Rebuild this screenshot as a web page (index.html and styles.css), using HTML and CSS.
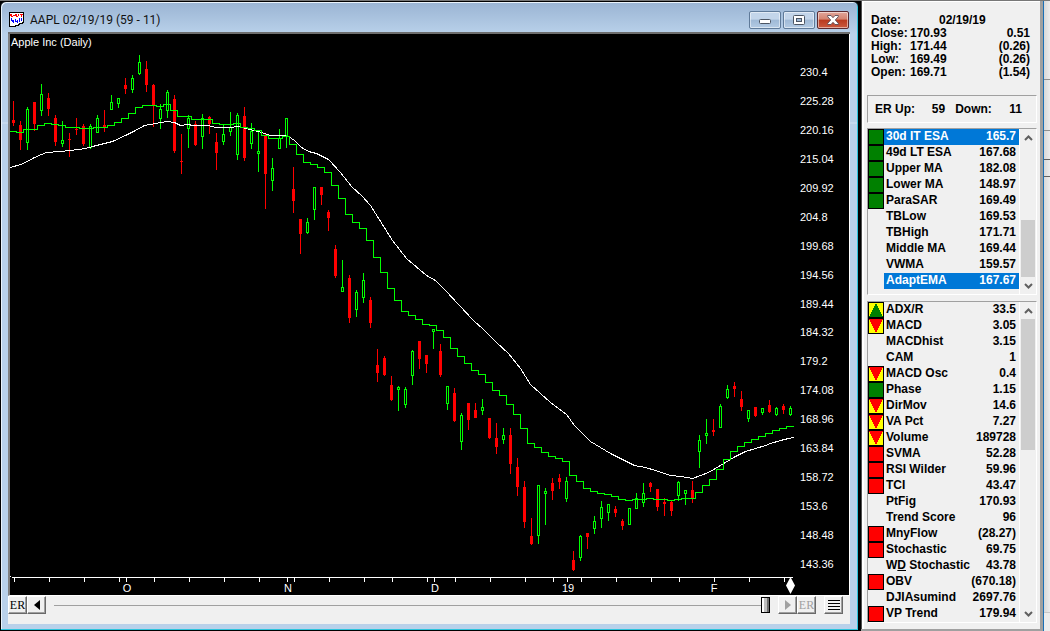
FILE: index.html
```html
<!DOCTYPE html>
<html lang="en">
<head>
<meta charset="utf-8">
<title>AAPL 02/19/19 (59 - 11)</title>
<link rel="stylesheet" href="styles.css">
</head>
<body>
<div class="desktop">
  <main class="window">
    <header class="titlebar">
      <svg class="app-icon" viewBox="0 0 16 16" width="16" height="16" aria-hidden="true" shape-rendering="crispEdges">
        <path d="M0 0h15v11l-3 1-3 2-4 1H0z" fill="#000"/>
        <path d="M1 1h13v9l-3 1-3 2-4 1H1z" fill="#fff"/>
        <path d="M1 2h2v2H1zM4 3h2v1H4zM6 2h2v2H6zM9 2h1v2H9zM11 2h3v1h-3zM2 4h2v1H2zM7 4h2v1H7zM12 3h1v2h-1z" fill="#f00"/>
        <path d="M2 6h1v3H2zM4 8h1v3H4zM6 7h1v3H6zM8 8h1v3H8zM10 6h1v4h-1zM12 6h1v3h-1zM3 8h1v2H3zM7 9h1v1H7z" fill="#00f"/>
      </svg>
      <h1 class="title">AAPL 02/19/19 (59 - 11)</h1>
      <div class="window-buttons">
        <button class="wbtn" aria-label="Minimize"><svg viewBox="0 0 12 10" width="12" height="10"><rect x=".5" y="4.500" width="11" height="4" rx="1" fill="#fff" stroke="#4c5563"/></svg></button>
        <button class="wbtn" aria-label="Maximize"><svg viewBox="0 0 12 10" width="12" height="10"><rect x=".5" y=".5" width="11" height="9" rx="1" fill="#fff" stroke="#4c5563"/><rect x="3.500" y="3.500" width="5" height="3" fill="#9fb9d6" stroke="#4c5563"/></svg></button>
        <button class="wbtn wbtn-close" aria-label="Close"><svg viewBox="0 0 12 10" width="12" height="10"><path d="M.7 .5h3.300L6 2.700 8 .5h3.300v1.200L8.300 5l3 3.300v1.200H8L6 7.300 4 9.500H.7V8.300l3-3.300-3-3.300z" fill="#fff" stroke="#5a4a55" stroke-width=".9"/></svg></button>
      </div>
    </header>
    <div class="client">
      <svg class="chart" id="chart" viewBox="10 34 839 561" role="img" aria-label="Apple Inc daily price chart">
        <g id="candles" shape-rendering="crispEdges"></g>
        <polyline class="average" shape-rendering="crispEdges" transform="translate(0.5 0.5)" points="10,167 20,164 27,161 34,157 41,154 46,152 60,151 70,150 85,148 92,146 104,143 112,141 125,135 135,130 144,125 155,123 167,121 174,122 180,125 187,124 193,125 208,125 215,127 230,127 238,126 245,128 258,131 270,135 283,135 288,136 294,140 301,147 308,151 316,153 328,159 340,172 351,186 362,196 370,205 392,240 406,258 426,275 435,280 445,290 458,304 473,320 483,329 496,342 508,353 520,368 530,384 540,393 550,402 566,414 574,425 590,441 610,453 634,465 645,467 655,470 670,475 680,476 692,478 700,475 708,472 720,465 733,457 745,451 755,448 765,445 770,443 780,440 788,438 794,437"/>
        <path id="steps" class="steps" shape-rendering="crispEdges"/>
        <path id="axis" class="axis" shape-rendering="crispEdges"/>
        <path class="marker" d="M790.500 577l4.500 8.500-4.500 8.500-4.500-8.500z"/>
        <text class="label" x="11" y="46">Apple Inc (Daily)</text>
        <g id="prices" class="label"></g>
        <g class="label month">
          <text x="127" y="592">O</text><text x="288" y="592">N</text><text x="435" y="592">D</text><text x="568" y="592">19</text><text x="714" y="592">F</text>
        </g>
      </svg>
      <div class="toolbar">
        <button class="tool serif">ER</button>
        <button class="tool" aria-label="Back"><svg viewBox="0 0 6 10" width="6" height="10"><path d="M6 0v10L0 5z" fill="#000"/></svg></button>
        <input class="slider" type="range" min="0" max="100" value="100" aria-label="Date position">
        <button class="tool tool-off" aria-label="Forward"><svg viewBox="0 0 6 10" width="6" height="10"><path d="M0 0v10l6-5z" fill="#a0a0a0"/></svg></button>
        <button class="tool tool-off serif">ER</button>
        <button class="tool tool-menu" aria-label="Menu"><svg viewBox="0 0 12 12" width="12" height="12" shape-rendering="crispEdges"><path d="M0 1h12v1H0zM0 4h12v1H0zM0 7h12v1H0zM0 10h12v1H0z" fill="#000"/></svg></button>
      </div>
    </div>
  </main>

  <aside class="panel">
    <table class="quote">
      <tr><th>Date:</th><td class="date" colspan="2">02/19/19</td></tr>
      <tr><th>Close:</th><td>170.93</td><td class="num">0.51</td></tr>
      <tr><th>High:</th><td>171.44</td><td class="num">(0.26)</td></tr>
      <tr><th>Low:</th><td>169.49</td><td class="num">(0.26)</td></tr>
      <tr><th>Open:</th><td>169.71</td><td class="num">(1.54)</td></tr>
    </table>
    <div class="er"><span>ER Up:</span><span class="er-value">59</span><span class="er-down">Down:</span><span class="er-value">11</span></div>

    <section class="list list-top">
      <table class="rows">
        <tr class="selected"><td class="flag green"></td><th>30d IT ESA</th><td class="num">165.7</td></tr>
        <tr><td class="flag green"></td><th>49d LT ESA</th><td class="num">167.68</td></tr>
        <tr><td class="flag green"></td><th>Upper MA</th><td class="num">182.08</td></tr>
        <tr><td class="flag green"></td><th>Lower MA</th><td class="num">148.97</td></tr>
        <tr><td class="flag green"></td><th>ParaSAR</th><td class="num">169.49</td></tr>
        <tr><td></td><th>TBLow</th><td class="num">169.53</td></tr>
        <tr><td></td><th>TBHigh</th><td class="num">171.71</td></tr>
        <tr><td></td><th>Middle MA</th><td class="num">169.44</td></tr>
        <tr><td></td><th>VWMA</th><td class="num">159.57</td></tr>
        <tr class="selected"><td></td><th>AdaptEMA</th><td class="num">167.67</td></tr>
      </table>
      <div class="scroll">
        <button class="arrow" aria-label="Scroll up"><svg viewBox="0 0 9 6" width="9" height="6"><path d="M1 5l3.500-3.500L8 5" fill="none" stroke="#606060" stroke-width="2"/></svg></button>
        <div class="track"><div class="thumb"></div></div>
        <button class="arrow" aria-label="Scroll down"><svg viewBox="0 0 9 6" width="9" height="6"><path d="M1 1l3.500 3.500L8 1" fill="none" stroke="#606060" stroke-width="2"/></svg></button>
      </div>
    </section>

    <section class="list list-bottom">
      <table class="rows">
        <tr><td class="flag up"></td><th>ADX/R</th><td class="num">33.5</td></tr>
        <tr><td class="flag down"></td><th>MACD</th><td class="num">3.05</td></tr>
        <tr><td></td><th>MACDhist</th><td class="num">3.15</td></tr>
        <tr><td></td><th>CAM</th><td class="num">1</td></tr>
        <tr><td class="flag down"></td><th>MACD Osc</th><td class="num">0.4</td></tr>
        <tr><td class="flag green"></td><th>Phase</th><td class="num">1.15</td></tr>
        <tr><td class="flag down"></td><th>DirMov</th><td class="num">14.6</td></tr>
        <tr><td class="flag down"></td><th>VA Pct</th><td class="num">7.27</td></tr>
        <tr><td class="flag down"></td><th>Volume</th><td class="num">189728</td></tr>
        <tr><td class="flag red"></td><th>SVMA</th><td class="num">52.28</td></tr>
        <tr><td class="flag red"></td><th>RSI Wilder</th><td class="num">59.96</td></tr>
        <tr><td class="flag red"></td><th>TCI</th><td class="num">43.47</td></tr>
        <tr><td></td><th>PtFig</th><td class="num">170.93</td></tr>
        <tr><td></td><th>Trend Score</th><td class="num">96</td></tr>
        <tr><td class="flag red"></td><th>MnyFlow</th><td class="num">(28.27)</td></tr>
        <tr><td class="flag red"></td><th>Stochastic</th><td class="num">69.75</td></tr>
        <tr><td></td><th>W<u>D</u> Stochastic</th><td class="num">43.78</td></tr>
        <tr><td class="flag red"></td><th>OBV</th><td class="num">(670.18)</td></tr>
        <tr><td></td><th>DJIAsumind</th><td class="num">2697.76</td></tr>
        <tr><td class="flag red"></td><th>VP Trend</th><td class="num">179.94</td></tr>
      </table>
      <div class="scroll">
        <button class="arrow" aria-label="Scroll up"><svg viewBox="0 0 9 6" width="9" height="6"><path d="M1 5l3.500-3.500L8 5" fill="none" stroke="#606060" stroke-width="2"/></svg></button>
        <div class="track"><div class="thumb thumb-long"></div></div>
        <button class="arrow" aria-label="Scroll down"><svg viewBox="0 0 9 6" width="9" height="6"><path d="M1 1l3.500 3.500L8 1" fill="none" stroke="#606060" stroke-width="2"/></svg></button>
      </div>
    </section>
  </aside>
  <div class="backdrop"><div class="tile tile-a"></div><div class="tile tile-b"></div><div class="tile tile-c"></div><div class="tile tile-d"></div><div class="tile tile-e"></div></div>
</div>
<script src="chart.js"></script>
</body>
</html>
```

FILE: styles.css
```css
* { box-sizing: border-box; }

body {
  margin: 0;
  background: #000;
  font: bold 12px/16px "Liberation Sans", Arial, sans-serif;
  color: #000;
}

button { font: inherit; padding: 0; margin: 0; border: 0; }

.desktop { display: flex; min-height: 100vh; border-top: 1px solid #777; }

/* Chart window */
.window {
  flex: 1;
  display: flex;
  flex-direction: column;
  min-width: 0;
  padding: 0 8px 6px 7px;
  margin-right: 2px;
  border: 1px solid #000;
  border-radius: 6px 6px 0 0;
  background: linear-gradient(#9ab4d3, #b9d1ea 32px, #b9d1ea 120px, #d3e2f2 121px, #b9d1ea 122px);
  box-shadow: inset -1px -1px 0 #2cc4dc, inset 1px 1px 0 #eaf3fb;
}

.titlebar { display: flex; align-items: center; gap: 5px; height: 30px; padding: 5px 1px 0 1px; }
.app-icon { display: block; }
.title { flex: 1; margin: 0; font: 12px/16px Roboto, "Open Sans", sans-serif; color: #111; }
.window-buttons { display: flex; gap: 2px; }

.wbtn {
  display: flex;
  align-items: center;
  justify-content: center;
  width: 32px;
  height: 18px;
  border: 1px solid #5f7a99;
  border-radius: 2px;
  background: linear-gradient(#c3d5ea 0 45%, #9fb9d6 50%, #b4cbe4);
  box-shadow: inset 0 0 0 1px rgba(255, 255, 255, .5);
}
.wbtn-close { border-color: #5c2a30; background: linear-gradient(#e2a59a, #d4836f 45%, #b93a20 50%, #cb5a40); }

.client {
  flex: 1;
  display: flex;
  flex-direction: column;
  border-top: 2px solid #6e6e6e;
  background: #f0f0f0;
}

.chart {
  display: block;
  width: 100%;
  background: #000;
  border-left: 2px solid #808080;
  border-right: 1px solid #fff;
  border-bottom: 1px solid #fff;
}
.average { fill: none; stroke: #fff; stroke-width: 1; }
.steps { fill: none; stroke: #0f0; stroke-width: 1; }
.axis { fill: none; stroke: #fff; stroke-width: 1; }
.marker { fill: #fff; }
.label { fill: #fff; font: 11px "Liberation Sans", Arial, sans-serif; }
.month { text-anchor: middle; }

.toolbar { display: flex; align-items: center; padding: 0 7px 8px 0; }
.tool {
  display: flex;
  align-items: center;
  justify-content: center;
  width: 19px;
  height: 18px;
  background: #f0f0f0;
  border: 1px solid;
  border-color: #fff #696969 #696969 #fff;
  box-shadow: inset -1px -1px 0 #a0a0a0;
}
.serif { font: 12px/14px "Liberation Serif", "Times New Roman", serif; }
.tool-off { color: #a0a0a0; }
.tool-menu { margin-left: 8px; }

.slider {
  flex: 1;
  min-width: 0;
  height: 16px;
  margin: 0 8px;
  appearance: none;
  background: linear-gradient(#a0a0a0, #a0a0a0) center / 100% 1px no-repeat;
}
.slider::-webkit-slider-thumb {
  appearance: none;
  width: 9px;
  height: 16px;
  border: 1px solid #000;
  background: linear-gradient(90deg, #fff 2px, #c0c0c0 2px 5px, #707070 5px);
}

/* Indicator panel */
.panel {
  width: 182px;
  display: flex;
  flex-direction: column;
  padding: 13px 0 4px 3px;
  border: solid #a0a0a0;
  border-width: 0 3px 2px 0;
  background: #f0f0f0;
  box-shadow: inset 1px 0 0 #505050, inset 3px 0 0 #fff, inset 0 1px 0 #fff;
}

table { border-collapse: collapse; }
th, td { padding: 0; text-align: left; font-weight: bold; }
td.num { text-align: right; }

.quote { width: 159px; margin: 0 0 16px 7px; line-height: 13px; }
.quote th { width: 39px; }
.quote .date { padding-left: 29px; }

.er {
  display: flex;
  height: 28px;
  margin: 0 3px 5px 3px;
  padding: 5px 14px 0 7px;
  border: 1px solid;
  border-color: #a0a0a0 #fff #fff #a0a0a0;
}
.er-value { flex: 1; text-align: right; }
.er-down { margin-left: 10px; }

.list {
  display: flex;
  margin: 0 3px;
  border: 1px solid;
  border-color: #a0a0a0 #fff #fff #a0a0a0;
}
.list-top { min-height: 167px; margin-bottom: 6px; }
.rows { flex: 1; align-self: flex-start; line-height: 14px; }
.rows tr { height: 16px; }
.rows th { padding: 0 0 2px 2px; white-space: nowrap; }
.rows td { padding: 0 3px 2px 0; }
.rows td:first-child { width: 16px; padding: 0; }
.selected th, .selected .num { background: #0078d7; color: #fff; }

.flag { box-shadow: inset 0 0 0 1px #000; }
.green { background: #008000; }
.red { background: #f00; }
.up { background: conic-gradient(from 153deg at 50% 1px, #008000 54deg, #ff0 54deg); }
.down { background: conic-gradient(from -27deg at 50% 15px, #f00 54deg, #ff0 54deg); }

.scroll { display: flex; flex-direction: column; width: 17px; padding: 0 1px; background: #f0f0f0; border-left: 1px solid #fff; }
.arrow { display: flex; align-items: center; justify-content: center; height: 17px; background: none; }
.track { flex: 1; display: flex; flex-direction: column; }
.thumb { height: 57px; margin-top: auto; background: #cdcdcd; }
.thumb-long { height: 131px; margin-top: 0; }

/* Windows behind the panel */
.backdrop { width: 7px; display: flex; flex-direction: column; border-left: 1px solid #1a6fb5; background: #ececec; }
.tile { border-bottom: 1px solid #909090; background: linear-gradient(90deg, #d8d8d8, #ececec); }
.tile-a { height: 79px; }
.tile-b { height: 51px; }
.tile-c { height: 29px; border-color: #606060; }
.tile-d { height: 17px; border-color: #606060; }
.tile-e { height: 436px; border-color: #c8c8c8; }
```

FILE: chart.js
```js
// Candles are seven units apart; each entry is direction, high, body top, body bottom, low.
const FIRST_X = 13;
const PITCH = 7;
const candles = `
R101,120,123,126 R121,125,140,150 G107,109,143,150 R102,102,124,131 G84,94,111,116 R93,98,109,116
R115,118,142,146 G121,140,144,147 R133,139,140,157 R118,129,130,135 R124,126,144,146 G124,126,148,149
G115,118,133,133 R110,125,127,132 G95,102,110,110 G98,98,104,108 R78,85,89,94 G75,78,90,93
G55,62,74,75 R61,69,85,92 R84,85,106,127 G104,109,119,129 G90,92,111,118 R95,99,151,153
R134,161,162,174 G115,118,129,148 R121,124,145,146 G114,118,137,149 R116,117,124,134 R133,142,153,170
G125,134,142,145 G112,127,132,136 G113,115,155,160 R107,116,158,161 G123,131,144,149 G130,151,154,172
R134,135,174,209 G158,168,181,191 G129,138,149,149 G118,118,136,148 R167,189,201,213 R219,219,234,254
G218,222,233,234 G187,187,210,220 R187,187,195,205 R210,212,218,231 R245,249,276,278 G260,287,292,292
R275,278,318,323 G290,292,310,317 G273,280,298,303 R297,300,323,328 R349,365,373,382 R356,358,375,376
R376,385,400,401 G386,387,390,411 G387,389,405,408 G350,351,376,385 R341,341,359,369 R355,355,364,373
G329,329,332,349 R344,351,375,377 G386,386,404,410 R388,393,421,422 G413,415,442,450 R403,403,420,430
R403,410,418,418 G399,407,411,415 R418,418,438,439 R423,438,447,454 G428,435,440,444 R428,435,464,474
R458,467,487,496 R481,487,522,528 R518,536,544,545 G485,485,536,544 G488,491,494,525 R478,483,491,500
R474,478,482,489 G477,481,499,502 R551,560,570,571 G535,536,558,561 R533,533,537,549 G516,521,529,534
G501,507,519,528 G504,504,513,521 R506,509,513,517 R519,521,526,530 G508,508,525,525 G493,498,509,509
G483,493,503,507 R482,483,487,492 R489,489,507,511 R498,502,504,516 R501,502,511,516 G481,482,496,501
G490,490,494,505 R481,490,499,503 G435,440,452,468 G419,433,436,444 R419,430,432,436 G404,406,428,428
G385,389,398,399 R382,386,389,397 R391,399,407,411 G410,410,419,422 R407,407,416,417 G408,408,413,415
R400,405,412,413 G407,408,415,416 R404,406,410,414 G406,408,415,416`.trim().split(/\s+/);

const steps = [
  131, 132, 129, 129, 125, 123, 124, 125, 127, 127, 128, 128, 127, 127, 125, 122, 118, 113, 107, 105,
  105, 106, 104, 110, 116, 116, 119, 119, 119, 123, 124, 124, 123, 127, 128, 130, 135, 138, 138, 136,
  144, 154, 162, 164, 167, 172, 185, 198, 214, 222, 228, 240, 257, 272, 288, 300, 311, 315, 319, 324,
  325, 330, 337, 348, 356, 363, 370, 374, 382, 390, 395, 404, 414, 428, 443, 447, 452, 456, 458, 461,
  475, 481, 488, 491, 493, 494, 496, 499, 500, 499, 499, 498, 499, 499, 500, 499, 498, 498, 492, 485,
  479, 469, 459, 451, 446, 442, 439, 436, 433, 430, 428, 426];

const ticks = [14, 49, 84, 119, 126, 154, 189, 224, 259, 287, 294, 329, 364, 392, 427, 434, 455, 490,
  525, 553, 567, 581, 616, 651, 679, 714, 749, 784];

const prices = ["230.4", "225.28", "220.16", "215.04", "209.92", "204.8", "199.68", "194.56", "189.44",
  "184.32", "179.2", "174.08", "168.96", "163.84", "158.72", "153.6", "148.48", "143.36"];

function add(parent, name, attributes, text) {
  const node = document.createElementNS("http://www.w3.org/2000/svg", name);
  for (const key in attributes) node.setAttribute(key, attributes[key]);
  if (text) node.textContent = text;
  parent.appendChild(node);
}

const candleLayer = document.getElementById("candles");
candles.forEach((entry, i) => {
  const x = FIRST_X + PITCH * i;
  const [high, top, bottom, low] = entry.slice(1).split(",").map(Number);
  const up = entry[0] === "G";
  const color = up ? "#0f0" : "#f00";
  add(candleLayer, "rect", { x, y: high, width: 1, height: low - high, fill: color });
  add(candleLayer, "rect", { x: x - 1, y: top, width: 3, height: bottom - top, fill: color });
  if (up) add(candleLayer, "rect", { x, y: top + 1, width: 1, height: Math.max(1, bottom - top - 2), fill: "#000" });
});

let path = "M10 131.5";
steps.forEach((y, i) => { path += `V${y + 0.5}H${16.5 + PITCH * i}`; });
document.getElementById("steps").setAttribute("d", path);

document.getElementById("axis").setAttribute("d",
  "M10 576.5h1M12 577.5H793" + ticks.map(x => `M${x + 0.5} 578v4`).join(""));

const priceLayer = document.getElementById("prices");
prices.forEach((price, i) => add(priceLayer, "text", { x: 800, y: Math.round(76 + 28.94 * i) }, price));
```
